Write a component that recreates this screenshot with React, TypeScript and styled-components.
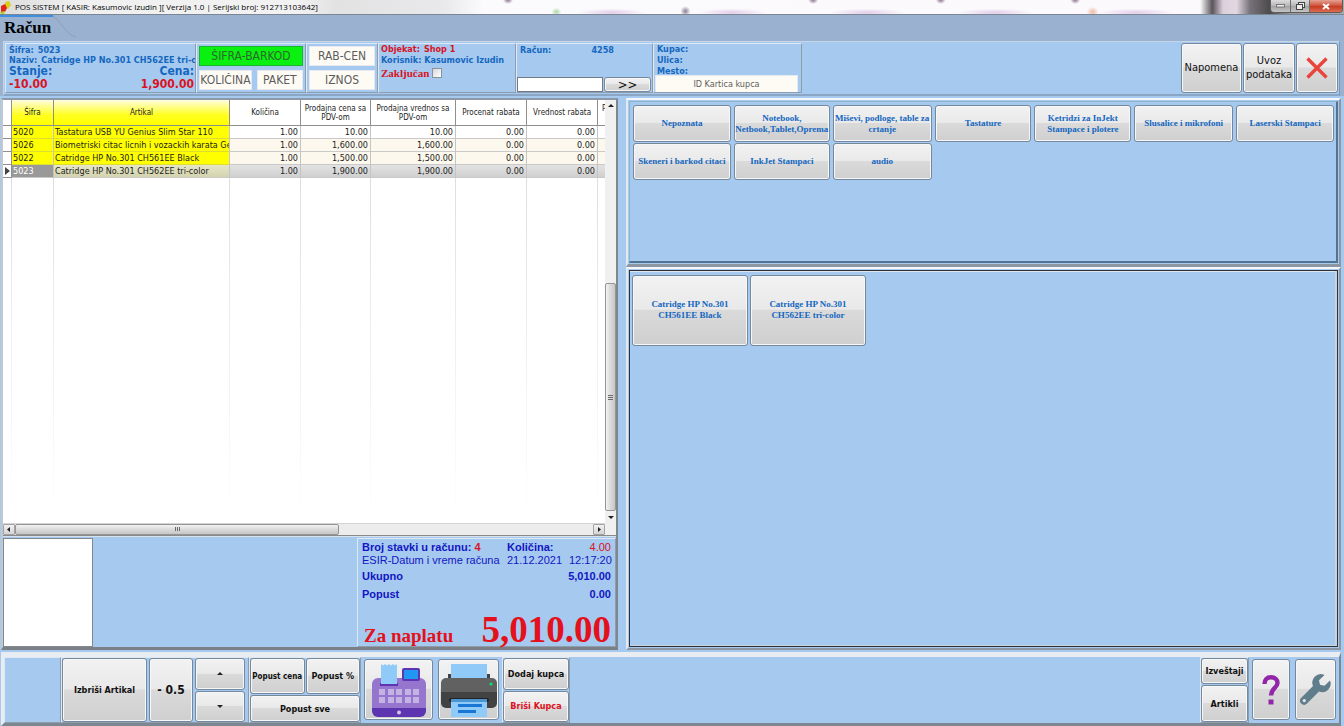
import React from "react";
import styled, { createGlobalStyle, css } from "styled-components";

const TAHOMA = `"DejaVu Sans Condensed", "DejaVu Sans", "Noto Sans", sans-serif`;
const SEGOE = `"Open Sans", "Noto Sans", sans-serif`;
const ARIAL = `"Liberation Sans", Arial, sans-serif`;
const TIMES = `"Liberation Serif", "Times New Roman", serif`;

const SKY = "#a6c9ef";
const STEEL = "#9ab2cf";
const BLUE = "#1467c0";
const RED = "#d9131f";
const NAVY = "#1216c4";

const GlobalStyle = createGlobalStyle`
  *, *::before, *::after { box-sizing: border-box; }
  body { margin: 0; font-family: ${TAHOMA}; background: ${STEEL}; color: #111; }
  button, input { font: inherit; color: inherit; margin: 0; }
  h1, p, dl, dd, dt { margin: 0; }
`;

const Shell = styled.div`
  min-height: 100vh;
  display: flex;
  flex-direction: column;
  background: ${STEEL};
`;

/* ---------- title bar ---------- */

const TitleBar = styled.header`
  height: 15px;
  flex: none;
  display: flex;
  align-items: center;
  gap: 4px;
  padding-right: 1px;
  overflow: hidden;
  font: 8px/14px ${SEGOE};
  color: #000;
  border-bottom: 1px solid #7b8694;
  background:
    radial-gradient(ellipse 5px 4px at 41.400% 85%, #a9d8a0, transparent),
    radial-gradient(ellipse 5px 5px at 51% 80%, #8d7f95, transparent),
    radial-gradient(ellipse 6px 5px at 81.300% 85%, #f0b8a4, transparent),
    radial-gradient(ellipse 34px 4px at 45.500% 90%, #e2cdea, transparent),
    radial-gradient(ellipse 34px 4px at 54.500% 90%, #e2cdea, transparent),
    radial-gradient(ellipse 38px 4px at 64.500% 90%, #e2cdea, transparent),
    radial-gradient(ellipse 38px 4px at 74% 90%, #e2cdea, transparent),
    radial-gradient(ellipse 38px 4px at 84.500% 90%, #e2cdea, transparent),
    radial-gradient(ellipse 5px 4px at 37.800% 0, #8d7090, transparent),
    radial-gradient(ellipse 5px 4px at 60.500% 0, #8d7090, transparent),
    radial-gradient(ellipse 5px 4px at 70% 0, #8d7090, transparent),
    radial-gradient(ellipse 5px 4px at 80% 0, #8d7090, transparent),
    linear-gradient(90deg, #dcdcdc 0, #f0f0f0 6%, #f2f2f2 22%, #e2e2e3 25%, #e9e8ea 33%, #fbfafc 36%, #fbf9fc 89.300%, #5a555a 90.200%, #dccfdc 91%, #e2d8e2 92%, #77727a 93%, #4c4a4c 94.500%, #999 96%, #aaa 100%);
`;

const TitleText = styled.span`
  flex: 1;
  white-space: nowrap;
`;

const WindowButtons = styled.div`
  display: flex;
  align-self: flex-start;
  height: 13px;
  border: 1px solid #5c5c5c;
  border-top: 0;
  border-radius: 0 0 4px 4px;
  overflow: hidden;
`;

const WindowButton = styled.button<{ $close?: boolean }>`
  width: ${(p) => (p.$close ? 33 : 19)}px;
  padding: 0;
  border: 0;
  border-left: 1px solid #6d6d6d;
  display: grid;
  place-items: center;
  background: ${(p) =>
    p.$close
      ? "linear-gradient(#e3a193, #cf4d36 50%, #c43a20 51%, #dd6b50)"
      : "linear-gradient(#dcdcdc, #b5b5b5 50%, #a2a2a2 51%, #c4c4c4)"};
  &:first-child { border-left: 0; }
`;

/* ---------- tab strip ---------- */

const TabStrip = styled.nav`
  height: 26px;
  flex: none;
  position: relative;
  display: flex;
`;

const TabEdge = styled.svg`
  position: absolute;
  left: 0;
  top: 0;
`;

const Tab = styled.h1`
  position: relative;
  padding: 1px 0 0 4px;
  font: bold 17px/24px ${TIMES};
  color: #000;
`;

/* ---------- header band ---------- */

const bevel = css`
  border: 1px solid;
  border-color: #dfe9f3 #8f9cab #8f9cab #dfe9f3;
`;

const HeaderBand = styled.section`
  flex: none;
  display: flex;
  height: 55px;
  margin: 0 4px 0 3px;
  padding: 1px;
  background: ${SKY};
  border: 1px solid #c6d6e6;
  border-right-color: #7d96b3;
  border-bottom: 2px solid #8ba6c5;
`;

const Cell = styled.div<{ $w: number }>`
  ${bevel};
  width: ${(p) => p.$w}px;
  flex: none;
  overflow: hidden;
  display: flex;
  flex-direction: column;
  color: ${BLUE};
  font-weight: bold;
  font-size: 9px;
  line-height: 10px;
  white-space: nowrap;
`;

const InfoCell = styled(Cell)`
  padding: 1px 1px 0 3px;
`;

const ShopCell = styled(Cell)`
  padding-left: 2px;
  gap: 1px;
`;

const Pair = styled.div<{ $big?: boolean; $red?: boolean; $spread?: boolean }>`
  display: flex;
  gap: 4px;
  ${(p) => p.$spread && "justify-content: space-between;"}
  ${(p) => p.$big && "font-size: 12px; line-height: 13px;"}
  ${(p) => p.$red && `color: ${RED};`}
`;

const ModeCell = styled(Cell)`
  padding: 2px;
  gap: 4px;
`;

const ModeRow = styled.div`
  display: flex;
  gap: 5px;
  height: 20px;
`;

const ModeInput = styled.input<{ $active?: boolean; $basis?: number }>`
  flex: ${(p) => p.$basis ?? 1} 1 0;
  min-width: 0;
  width: 100%;
  padding: 0;
  border: 1px solid ${(p) => (p.$active ? "#19b52c" : "#e6eaf0")};
  background: ${(p) => (p.$active ? "#0af010" : "#fdfbf4")};
  text-align: center;
  font-size: 12px;
  font-weight: normal;
  &::placeholder { color: ${(p) => (p.$active ? "#2c6a2c" : "#5d5d5d")}; opacity: 1; }
`;

const LockLabel = styled.label`
  display: flex;
  align-items: center;
  gap: 3px;
  color: ${RED};
  font: bold 11px/14px ${TIMES};
`;

const Check = styled.input`
  appearance: none;
  width: 10px;
  height: 10px;
  border: 1px solid #8b9299;
  background: linear-gradient(135deg, #d4d8dc, #fff);
`;

const ReceiptCell = styled(Cell)`
  padding: 1px 1px 0 3px;
  justify-content: space-between;
`;

const ReceiptTop = styled.div`
  display: flex;
  justify-content: space-between;
  padding-right: 37px;
`;

const ReceiptForm = styled.div`
  display: flex;
  gap: 1px;
  margin-left: -3px;
`;

const PlainInput = styled.input`
  width: 86px;
  height: 15px;
  padding: 0 2px;
  border: 1px solid #6f7b88;
  background: #fff;
`;

const BuyerCell = styled(Cell)`
  padding: 0 1px 1px 3px;
  line-height: 11px;
`;

const CardInput = styled(ModeInput)`
  flex: none;
  height: 18px;
  margin-left: -2px;
  margin-top: -2px;
  font-size: 9px;
`;

const Spacer = styled.div`
  flex: 1;
`;

/* ---------- buttons ---------- */

const Key = styled.button`
  min-width: 0;
  padding: 0 1px;
  border: 1px solid #76889c;
  border-radius: 3px;
  box-shadow: inset 0 0 0 1px #f6f7f8;
  background: linear-gradient(#f2f2f2, #e9e9e9 48%, #dadada 50%, #cfcfcf);
  display: flex;
  align-items: center;
  justify-content: center;
  text-align: center;
`;

const GoKey = styled(Key)`
  flex: 1;
  height: 15px;
  color: #111;
  font-size: 13px;
  line-height: 12px;
  font-weight: normal;
`;

const TopKeys = styled.div`
  display: flex;
  gap: 1px;
`;

const TopKey = styled(Key)<{ $w: number }>`
  width: ${(p) => p.$w}px;
  font-size: 11px;
  line-height: 14px;
`;

/* ---------- workspace ---------- */

const Workspace = styled.main`
  flex: 1;
  display: grid;
  grid-template-columns: minmax(0, 617fr) minmax(0, 715fr);
  gap: 8px;
  padding: 2px 3px 0 1px;
  background: ${SKY};
`;

const LeftColumn = styled.div`
  display: flex;
  flex-direction: column;
  border: 2px solid #9aa0a6;
  border-top-color: #8d99a6;
  border-left-color: #c3c8ce;
  border-right: 2px solid #7f868d;
  border-bottom: 3px solid #7b8086;
  background: ${SKY};
`;

const GridFrame = styled.div`
  flex: 1;
  display: grid;
  grid-template-columns: minmax(0, 1fr) 11px;
  grid-template-rows: minmax(0, 1fr) 12px;
  background: #fff;
  border-bottom: 1px solid #8a8a8a;
`;

const TableClip = styled.div`
  overflow: hidden;
  display: flex;
`;

const Table = styled.table`
  flex: none;
  width: 640px;
  table-layout: fixed;
  border-collapse: separate;
  border-spacing: 0;
  font-size: 9px;
  line-height: 12px;
  color: #1c1c1c;
`;

const Th = styled.th<{ $yellow?: boolean }>`
  height: 26px;
  padding: 0 2px;
  font-weight: normal;
  font-size: 8px;
  line-height: 9px;
  border-right: 1px solid #8f8f8f;
  border-bottom: 1px solid #8f8f8f;
  background: ${(p) =>
    p.$yellow ? "linear-gradient(#fffde0, #ffff20 60%, #ffff00)" : "#fff"};
`;

type RowTone = "plain" | "cream" | "selected";

const toneFill: Record<RowTone, string> = {
  plain: "#fff",
  cream: "#fdf8ee",
  selected: "linear-gradient(#e3e3e3, #cfcfcf)",
};

const Td = styled.td<{ $tone?: RowTone; $kind?: "code" | "name" | "mark" }>`
  height: 13px;
  padding: 0 2px 0 1px;
  overflow: hidden;
  white-space: nowrap;
  text-align: ${(p) => (p.$kind ? "left" : "right")};
  border-right: 1px solid #c4c4c4;
  border-bottom: 1px solid #c9c9c9;
  background: ${(p) => toneFill[p.$tone ?? "plain"]};
  ${(p) => p.$kind && "padding-right: 0;"}
  ${(p) => p.$kind === "mark" && "background: #fff; border-color: #8f8f8f; padding: 0;"}
  ${(p) =>
    (p.$kind === "code" || p.$kind === "name") &&
    p.$tone !== "selected" &&
    "background: #ffff00; border-bottom-color: #dede30;"}
  ${(p) =>
    p.$kind === "code" && p.$tone === "selected" && "background: #999; color: #fff;"}
  ${(p) =>
    p.$kind === "name" &&
    p.$tone === "selected" &&
    "background: linear-gradient(#e6e6c8, #d3d3ae);"}
`;

const EmptyTd = styled.td`
  padding: 0;
  background: linear-gradient(#dedede, #ededed 40%, #fff) right / 1px 100% no-repeat;
`;

const Marker = styled.svg`
  display: block;
  margin-left: 2px;
`;

const VScroll = styled.div`
  display: flex;
  flex-direction: column;
  background: #f0f0f0;
`;

const HScroll = styled.div`
  display: flex;
  background: #ececec;
  border-top: 1px solid #d4d4d4;
`;

const ScrollArrow = styled.button<{ $boxed?: boolean }>`
  flex: none;
  width: 12px;
  height: 11px;
  padding: 0;
  display: grid;
  place-items: center;
  border: ${(p) => (p.$boxed ? "1px solid #a3a3a3" : "0")};
  border-radius: 1px;
  background: ${(p) => (p.$boxed ? "linear-gradient(#f2f2f2, #d4d4d4)" : "transparent")};
`;

const ScrollTrack = styled.div<{ $grow: number }>`
  flex: ${(p) => p.$grow} 1 0;
`;

const ScrollThumb = styled.div<{ $grow: number; $vertical?: boolean }>`
  flex: ${(p) => p.$grow} 1 0;
  display: grid;
  place-items: center;
  border: 1px solid #959595;
  border-radius: 2px;
  background: linear-gradient(${(p) => (p.$vertical ? "90deg" : "180deg")}, #f3f3f3, #dcdcdc 45%, #c6c6c6);
`;

const Corner = styled.div`
  background: #f0f0f0;
`;

const SummaryRow = styled.div`
  height: 111px;
  flex: none;
  display: flex;
  padding-top: 1px;
  border-top: 1px solid #d8e2ec;
`;

const Display = styled.div`
  width: 90px;
  background: #fff;
  border: 1px solid #808890;
`;

const Totals = styled.section`
  ${bevel};
  width: 259px;
  padding: 2px 4px 0 4px;
  display: flex;
  flex-direction: column;
  color: ${NAVY};
  font: 11px/13px ${ARIAL};
  white-space: nowrap;
`;

const TotalsTriple = styled.div<{ $bold?: boolean }>`
  display: grid;
  grid-template-columns: 1fr 62px 42px;
  font-weight: ${(p) => (p.$bold ? "bold" : "normal")};
  & > :last-child { text-align: right; }
`;

const TotalsLine = styled.div`
  display: flex;
  justify-content: space-between;
  font-weight: bold;
  line-height: 18px;
`;

const Warm = styled.span<{ $light?: boolean }>`
  color: ${RED};
  font-weight: ${(p) => (p.$light ? "normal" : "bold")};
`;

const Due = styled.div`
  margin-top: auto;
  display: flex;
  justify-content: space-between;
  align-items: baseline;
  padding-left: 2px;
  color: #e4101b;
  font: bold 19px/20px ${TIMES};
`;

const DueAmount = styled.span`
  font-size: 37px;
  line-height: 30px;
`;

/* ---------- catalogue ---------- */

const RightColumn = styled.div`
  display: flex;
  flex-direction: column;
`;

const Catalogue = styled.section`
  flex: 378 1 0;
  border: 2px solid;
  border-color: #f5f7f9 #8c97a2 #8c97a2 #e2e9ef;
  padding: 1px;
  display: flex;
`;

const Categories = styled(Catalogue)`
  flex: 162 1 0;
  border-bottom-width: 3px;
`;

const CategoryGrid = styled.div`
  flex: 1;
  display: grid;
  grid-template-columns: 98fr 96fr 99fr 97fr 97fr 99fr 98fr;
  grid-auto-rows: 37px;
  gap: 1px 3px;
  align-content: start;
  padding: 3px 2px 3px 3px;
  background: ${SKY};
  border: 1px solid #8db4cb;
  border-right: 2px solid #547391;
  border-bottom: 2px solid #547391;
`;

const ProductGrid = styled.div`
  flex: 1;
  display: flex;
  flex-wrap: wrap;
  gap: 2px;
  align-content: flex-start;
  padding: 4px 2px;
  background: ${SKY};
  border: 1px solid #2e3338;
  box-shadow: inset -2px -1px 0 #c9d3dd, inset 0 1px 0 #dbe6f1;
`;

const CategoryKey = styled(Key)`
  color: ${BLUE};
  font: bold 9px/11px ${TIMES};
`;

const ProductKey = styled(CategoryKey)`
  width: 116px;
  height: 71px;
  padding: 0 14px;
`;

/* ---------- footer ---------- */

const Footer = styled.footer`
  flex: none;
  display: flex;
  height: 76px;
  padding: 2px 3px 0 1px;
  background: ${SKY};
`;

const FooterBar = styled.div`
  flex: 1;
  display: flex;
  background: ${SKY};
  border: 3px solid #e9edf1;
  border-top-width: 5px;
  border-right: 2px solid #7c8792;
  border-bottom: 3px solid #7c8792;
`;

const KeyGroup = styled.div<{ $cols: string; $rows?: string; $w: number }>`
  ${bevel};
  width: ${(p) => p.$w}px;
  flex: none;
  display: grid;
  gap: 1px;
  grid-template-columns: ${(p) => p.$cols};
  grid-template-rows: ${(p) => p.$rows ?? "1fr 1fr"};
`;

const ItemKeyGroup = styled(KeyGroup)`
  gap: 1px 2px;
  padding-right: 3px;
`;

const FootKey = styled(Key)<{ $size?: number; $tall?: boolean; $wide?: boolean; $red?: boolean }>`
  font-weight: bold;
  font-size: ${(p) => p.$size ?? 9}px;
  white-space: nowrap;
  ${(p) => p.$tall && "grid-row: span 2;"}
  ${(p) => p.$wide && "grid-column: span 2;"}
  ${(p) => p.$red && `color: #e01020;`}
`;

const IconKey = styled(Key)<{ $w: number }>`
  width: ${(p) => p.$w}px;
  flex: none;
  margin: 2px 0 3px;
`;

const IconPair = styled.div`
  display: flex;
  gap: 5px;
  padding: 0 3px;
`;

/* ---------- icons ---------- */

const AppIcon = () => (
  <svg width="11" height="14" viewBox="0 0 11 14" aria-hidden="true">
    <path d="M5 2 L9 1 L11 5 L8 9 L5 7Z" fill="#d8d01a" />
    <path d="M1 6 L5 4 L7 8 L5 12 L1 12Z" fill="#e2231a" />
    <path d="M0 12 L5 11 L4 14 L1 14Z" fill="#b7c92c" />
  </svg>
);

const CrossIcon = () => (
  <svg width="24" height="24" viewBox="0 0 24 24" aria-hidden="true">
    <path d="M2.500 2.500 L21.500 21.500 M21.500 2.500 L2.500 21.500" stroke="#e8453c" strokeWidth="3.400" fill="none" />
  </svg>
);

const RegisterIcon = () => (
  <svg width="54" height="54" viewBox="0 0 54 54" aria-hidden="true">
    <path d="M6 15 H48 a6 6 0 0 1 6 6 V48 H0 V21 a6 6 0 0 1 6-6Z" fill="#9575cd" />
    <path d="M0 45 H54 V48 a6 6 0 0 1-6 6 H6 a6 6 0 0 1-6-6Z" fill="#5e35b1" />
    <rect x="30" y="5" width="18" height="13" rx="2" fill="#5e35b1" />
    <rect x="32" y="7" width="14" height="9" fill="#2196f3" />
    <rect x="8" y="20" width="18" height="3" fill="#5e35b1" />
    <path d="M9 1 l2 1.500 l2-1.500 l2 1.500 l2-1.500 l2 1.500 l2-1.500 l2 1.500 l2-1.500 V21 H9Z" fill="#90caf9" />
    {[7, 16, 24, 33, 41].map((x) => (
      <g key={x} fill="#c3b2e2">
        <rect x={x} y="26" width="6" height="6" />
        <rect x={x} y="34" width="6" height="6" />
      </g>
    ))}
    <circle cx="27" cy="49.500" r="2" fill="#d1c4e9" />
  </svg>
);

const PrinterIcon = () => (
  <svg width="56" height="54" viewBox="0 0 56 54" aria-hidden="true">
    <rect x="7" y="11" width="42" height="9" fill="#424242" />
    <rect x="10" y="1" width="36" height="14" fill="#90caf9" />
    <path d="M5 15 H51 a5 5 0 0 1 5 5 V30 H0 V20 a5 5 0 0 1 5-5Z" fill="#616161" />
    <path d="M0 29 H56 V40 a5 5 0 0 1-5 5 H5 a5 5 0 0 1-5-5Z" fill="#424242" />
    <rect x="8" y="35" width="40" height="4" rx="2" fill="#222" />
    <circle cx="50" cy="21" r="1.600" fill="#00e676" />
    <rect x="10" y="36" width="36" height="18" fill="#90caf9" />
    <rect x="10" y="36" width="36" height="3" fill="#4b95cf" />
    <rect x="17" y="41" width="24" height="3" fill="#1976d2" />
    <rect x="17" y="47" width="18" height="3" fill="#1976d2" />
  </svg>
);

const HelpIcon = () => (
  <svg width="18" height="30" viewBox="0 0 18 30" aria-hidden="true">
    <path
      d="M2.500 9 C2.500 4.500 5 2.300 9 2.300 C13 2.300 15.500 4.500 15.500 8 C15.500 13 9 13 9 20.500"
      stroke="#9127a8"
      strokeWidth="4.400"
      fill="none"
    />
    <rect x="6.500" y="24.500" width="5" height="5" fill="#9127a8" />
  </svg>
);

const WrenchIcon = () => (
  <svg width="31" height="31" viewBox="0 0 31 31" aria-hidden="true">
    <path
      d="M24.500 1 A8.500 8.500 0 0 0 13 12 L1.300 23.700 A4 4 0 0 0 7 29.600 L19 17.600 A8.500 8.500 0 0 0 30 6.500 L24.500 11.800 L20 10.700 L19 6.300Z"
      fill="#607d8b"
    />
    <circle cx="4.300" cy="26.600" r="1.700" fill="#dfe3e6" />
  </svg>
);

const Arrow = ({ dir }: { dir: "up" | "down" | "left" | "right" }) => {
  const d = {
    up: "M0 5 L3 2 L6 5Z",
    down: "M0 2 L3 5 L6 2Z",
    left: "M4 1 L1 3.500 L4 6Z",
    right: "M2 1 L5 3.500 L2 6Z",
  }[dir];
  return (
    <svg width="6" height="7" viewBox="0 0 6 7" aria-hidden="true">
      <path d={d} fill="#222" />
    </svg>
  );
};

const Grip = ({ vertical }: { vertical?: boolean }) => (
  <svg width="7" height="7" viewBox="0 0 7 7" aria-hidden="true">
    <path
      d={vertical ? "M1 1.500H6M1 3.500H6M1 5.500H6" : "M1.500 1V5M3.500 1V5M5.500 1V5"}
      stroke="#6a6a6a"
      strokeWidth="1"
    />
  </svg>
);

/* ---------- data ---------- */

const columns = [
  { title: "", width: 9 },
  { title: "Šifra", width: 42, yellow: true },
  { title: "Artikal", width: 176, yellow: true },
  { title: "Količina", width: 71 },
  { title: "Prodajna cena sa PDV-om", width: 70 },
  { title: "Prodajna vrednos sa PDV-om", width: 85 },
  { title: "Procenat rabata", width: 71 },
  { title: "Vrednost rabata", width: 71 },
  { title: "P", width: 45 },
];

const rows: { code: string; name: string; price: string; tone: RowTone }[] = [
  { code: "5020", name: "Tastatura USB YU Genius Slim Star 110", price: "10.00", tone: "plain" },
  { code: "5026", name: "Biometriski citac licnih i vozackih karata Ger", price: "1,600.00", tone: "cream" },
  { code: "5022", name: "Catridge HP No.301 CH561EE Black", price: "1,500.00", tone: "cream" },
  { code: "5023", name: "Catridge HP No.301 CH562EE tri-color", price: "1,900.00", tone: "selected" },
];

const categories = [
  "Nepoznata",
  "Notebook, Netbook,Tablet,Oprema",
  "Miševi, podloge, table za crtanje",
  "Tastature",
  "Ketridzi za InJekt Stampace i plotere",
  "Slusalice i mikrofoni",
  "Laserski Stampaci",
  "Skeneri i barkod citaci",
  "InkJet Stampaci",
  "audio",
];

const products = ["Catridge HP No.301 CH561EE Black", "Catridge HP No.301 CH562EE tri-color"];

/* ---------- page ---------- */

const LastTh = styled(Th)`
  text-align: left;
  vertical-align: top;
  padding-top: 4px;
  padding-left: 4px;
`;

const ItemsTable = () => (
  <Table>
    <colgroup>
      {columns.map((c, i) => (
        <col key={i} width={c.width} />
      ))}
    </colgroup>
    <thead>
      <tr>
        {columns.map((c, i) =>
          c.title === "P" ? (
            <LastTh key={i}>{c.title}</LastTh>
          ) : (
            <Th key={i} $yellow={c.yellow}>{c.title}</Th>
          )
        )}
      </tr>
    </thead>
    <tbody>
      {rows.map((r) => (
        <tr key={r.code}>
          <Td $kind="mark">
            {r.tone === "selected" && (
              <Marker width="5" height="8" viewBox="0 0 5 8">
                <path d="M0 0 L5 4 L0 8Z" fill="#444" />
              </Marker>
            )}
          </Td>
          <Td $kind="code" $tone={r.tone}>{r.code}</Td>
          <Td $kind="name" $tone={r.tone}>{r.name}</Td>
          <Td $tone={r.tone}>1.00</Td>
          <Td $tone={r.tone}>{r.price}</Td>
          <Td $tone={r.tone}>{r.price}</Td>
          <Td $tone={r.tone}>0.00</Td>
          <Td $tone={r.tone}>0.00</Td>
          <Td $tone={r.tone} />
        </tr>
      ))}
      <tr>
        {columns.map((_, i) => (
          <EmptyTd key={i} />
        ))}
      </tr>
    </tbody>
  </Table>
);

export default function App() {
  return (
    <Shell>
      <GlobalStyle />
      <TitleBar>
        <AppIcon />
        <TitleText>POS SISTEM [ KASIR: Kasumovic Izudin ][ Verzija 1.0 | Serijski broj: 912713103642]</TitleText>
        <WindowButtons>
          <WindowButton aria-label="Minimize">
            <svg width="9" height="4"><rect x="0.500" y="0.500" width="8" height="2.500" fill="#eee" stroke="#777" /></svg>
          </WindowButton>
          <WindowButton aria-label="Restore">
            <svg width="9" height="9" fill="#eee" stroke="#444">
              <rect x="2.500" y="0.500" width="6" height="5" />
              <rect x="0.500" y="2.500" width="6" height="5" />
            </svg>
          </WindowButton>
          <WindowButton $close aria-label="Close">
            <svg width="8" height="7"><path d="M1 1L7 6M7 1L1 6" stroke="#fff" strokeWidth="2" /></svg>
          </WindowButton>
        </WindowButtons>
      </TitleBar>

      <TabStrip>
        <TabEdge width="80" height="26" viewBox="0 0 80 26">
          <path d="M0 1 H53" stroke="#3f8fe0" strokeWidth="2" />
          <path d="M53 1 C60 5 66 20 76 22" stroke="#8aa0bb" fill="none" />
        </TabEdge>
        <Tab>Račun</Tab>
      </TabStrip>

      <HeaderBand>
        <InfoCell $w={191}>
          <Pair><span>Šifra:</span><span>5023</span></Pair>
          <Pair><span>Naziv:</span><span>Catridge HP No.301 CH562EE tri-co</span></Pair>
          <Pair $big $spread><span>Stanje:</span><span>Cena:</span></Pair>
          <Pair $big $spread $red><span>-10.00</span><span>1,900.00</span></Pair>
        </InfoCell>
        <ModeCell $w={110}>
          <ModeRow><ModeInput $active aria-label="Šifra-barkod" placeholder="ŠIFRA-BARKOD" /></ModeRow>
          <ModeRow>
            <ModeInput $basis={54} aria-label="Količina" placeholder="KOLIČINA" />
            <ModeInput $basis={47} aria-label="Paket" placeholder="PAKET" />
          </ModeRow>
        </ModeCell>
        <ModeCell $w={72}>
          <ModeRow><ModeInput aria-label="Rab-cen" placeholder="RAB-CEN" /></ModeRow>
          <ModeRow><ModeInput aria-label="Iznos" placeholder="IZNOS" /></ModeRow>
        </ModeCell>
        <ShopCell $w={138}>
          <Pair $red><span>Objekat:</span><span>Shop 1</span></Pair>
          <Pair><span>Korisnik: Kasumovic Izudin</span></Pair>
          <LockLabel>Zaključan<Check type="checkbox" /></LockLabel>
        </ShopCell>
        <ReceiptCell $w={137}>
          <ReceiptTop><span>Račun:</span><span>4258</span></ReceiptTop>
          <ReceiptForm>
            <PlainInput aria-label="Broj računa" />
            <GoKey>&gt;&gt;</GoKey>
          </ReceiptForm>
        </ReceiptCell>
        <BuyerCell $w={149}>
          <span>Kupac:</span>
          <span>Ulica:</span>
          <span>Mesto:</span>
          <CardInput aria-label="ID kartica kupca" placeholder="ID Kartica kupca" />
        </BuyerCell>
        <Spacer />
        <TopKeys>
          <TopKey $w={61}>Napomena</TopKey>
          <TopKey $w={52}>Uvoz podataka</TopKey>
          <TopKey $w={42} aria-label="Zatvori"><CrossIcon /></TopKey>
        </TopKeys>
      </HeaderBand>

      <Workspace>
        <LeftColumn>
          <GridFrame>
            <TableClip><ItemsTable /></TableClip>
            <VScroll>
              <ScrollArrow aria-label="Gore"><Arrow dir="up" /></ScrollArrow>
              <ScrollTrack $grow={173} />
              <ScrollThumb $grow={227} $vertical><Grip vertical /></ScrollThumb>
              <ScrollTrack $grow={1} />
              <ScrollArrow aria-label="Dole"><Arrow dir="down" /></ScrollArrow>
            </VScroll>
            <HScroll>
              <ScrollArrow $boxed aria-label="Levo"><Arrow dir="left" /></ScrollArrow>
              <ScrollThumb $grow={322}><Grip /></ScrollThumb>
              <ScrollTrack $grow={254} />
              <ScrollArrow $boxed aria-label="Desno"><Arrow dir="right" /></ScrollArrow>
            </HScroll>
            <Corner />
          </GridFrame>
          <SummaryRow>
            <Display />
            <Spacer />
            <Totals>
              <TotalsTriple $bold>
                <span>Broj stavki u računu: <Warm>4</Warm></span>
                <span>Količina:</span>
                <Warm $light>4.00</Warm>
              </TotalsTriple>
              <TotalsTriple>
                <span>ESIR-Datum i vreme računa</span>
                <span>21.12.2021</span>
                <span>12:17:20</span>
              </TotalsTriple>
              <TotalsLine><span>Ukupno</span><span>5,010.00</span></TotalsLine>
              <TotalsLine><span>Popust</span><span>0.00</span></TotalsLine>
              <Due><span>Za naplatu</span><DueAmount>5,010.00</DueAmount></Due>
            </Totals>
          </SummaryRow>
        </LeftColumn>

        <RightColumn>
          <Categories>
            <CategoryGrid>
              {categories.map((c) => <CategoryKey key={c}>{c}</CategoryKey>)}
            </CategoryGrid>
          </Categories>
          <Catalogue>
            <ProductGrid>
              {products.map((p) => <ProductKey key={p}>{p}</ProductKey>)}
            </ProductGrid>
          </Catalogue>
        </RightColumn>
      </Workspace>

      <Footer>
        <FooterBar>
          <KeyGroup $w={57} $cols="1fr" />
          <ItemKeyGroup $w={188} $cols="85fr 44fr 50fr">
            <FootKey $tall>Izbriši Artikal</FootKey>
            <FootKey $tall $size={12}>- 0.5</FootKey>
            <FootKey aria-label="Povećaj"><Arrow dir="up" /></FootKey>
            <FootKey aria-label="Smanji"><Arrow dir="down" /></FootKey>
          </ItemKeyGroup>
          <KeyGroup $w={112} $cols="1fr 1fr" $rows="37fr 27fr">
            <FootKey $size={8}>Popust cena</FootKey>
            <FootKey>Popust %</FootKey>
            <FootKey $wide>Popust sve</FootKey>
          </KeyGroup>
          <IconPair>
            <IconKey $w={69} aria-label="Kasa"><RegisterIcon /></IconKey>
            <IconKey $w={61} aria-label="Štampaj"><PrinterIcon /></IconKey>
          </IconPair>
          <KeyGroup $w={68} $cols="1fr">
            <FootKey>Dodaj kupca</FootKey>
            <FootKey $red>Briši Kupca</FootKey>
          </KeyGroup>
          <Spacer />
          <KeyGroup $w={49} $cols="1fr" $rows="26fr 37fr">
            <FootKey>Izveštaji</FootKey>
            <FootKey>Artikli</FootKey>
          </KeyGroup>
          <IconPair>
            <IconKey $w={38} aria-label="Pomoć"><HelpIcon /></IconKey>
            <IconKey $w={41} aria-label="Podešavanja"><WrenchIcon /></IconKey>
          </IconPair>
        </FooterBar>
      </Footer>
    </Shell>
  );
}
